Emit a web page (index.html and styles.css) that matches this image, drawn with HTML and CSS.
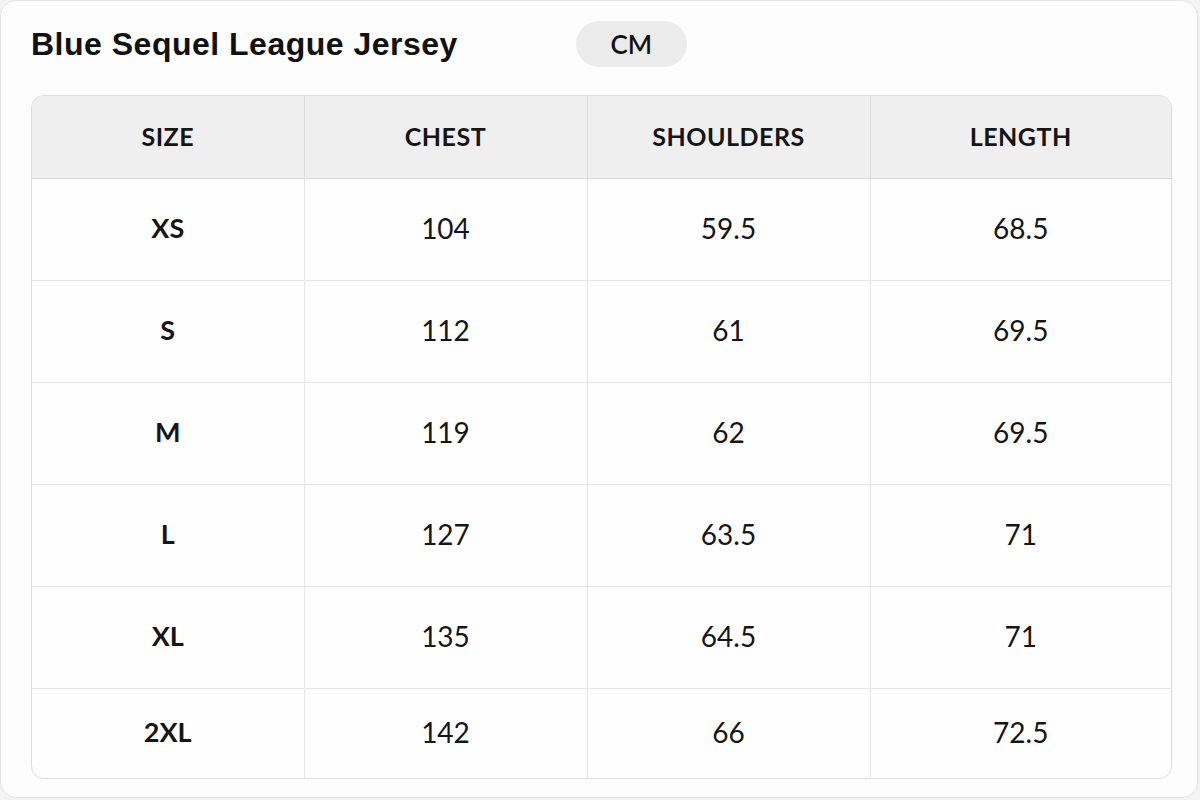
FILE: index.html
```html
<!DOCTYPE html>
<html lang="en">
<head>
<meta charset="utf-8">
<title>Blue Sequel League Jersey – Size Chart</title>
<link rel="stylesheet" href="styles.css">
</head>
<body>
<div class="card">
  <div class="top">
    <h1 class="title">Blue Sequel League Jersey</h1>
    <span class="unit">CM</span>
  </div>
  <div class="table-wrap">
    <table class="chart">
      <colgroup>
        <col class="c1"><col class="c2"><col class="c3"><col class="c4">
      </colgroup>
      <thead>
        <tr><th>SIZE</th><th>CHEST</th><th>SHOULDERS</th><th>LENGTH</th></tr>
      </thead>
      <tbody>
        <tr><td class="size">XS</td><td>104</td><td>59.5</td><td>68.5</td></tr>
        <tr><td class="size">S</td><td>112</td><td>61</td><td>69.5</td></tr>
        <tr><td class="size">M</td><td>119</td><td>62</td><td>69.5</td></tr>
        <tr><td class="size">L</td><td>127</td><td>63.5</td><td>71</td></tr>
        <tr><td class="size">XL</td><td>135</td><td>64.5</td><td>71</td></tr>
        <tr class="last"><td class="size">2XL</td><td>142</td><td>66</td><td>72.5</td></tr>
      </tbody>
    </table>
  </div>
</div>
</body>
</html>
```
FILE: styles.css
```css
* { box-sizing: border-box; }
html, body { margin: 0; padding: 0; }
body {
  background: #f3f3f3;
  width: 1200px;
  height: 800px;
  overflow: hidden;
  font-family: "Lato", "Open Sans", sans-serif;
  color: #111;
}
.card {
  width: 1198px;
  height: 798px;
  background: #fdfdfd;
  border: 1px solid #e4e4e4;
  border-radius: 16px;
  padding: 20px 25px 20px 30px;
}
.top {
  display: flex;
  align-items: center;
  gap: 118px;
  height: 46px;
}
.title {
  margin: 0;
  font-family: "Liberation Sans", Arial, sans-serif;
  font-weight: 700;
  font-size: 32px;
  color: #111;
  letter-spacing: 0.5px;
}
.unit {
  display: inline-flex;
  align-items: center;
  justify-content: center;
  width: 111px;
  height: 46px;
  border-radius: 23px;
  background: #ebebeb;
  font-size: 26px;
  font-weight: 600;
  color: #111;
}
.table-wrap {
  margin-top: 28px;
  width: 1141px;
  border: 1px solid #dddddd;
  border-radius: 13px;
  overflow: hidden;
  background: #fefefe;
}
.chart {
  width: 100%;
  border-collapse: collapse;
  table-layout: fixed;
}
.c1 { width: 272px; }
.c2 { width: 283px; }
.c3 { width: 283px; }
.c4 { width: auto; }
.chart th {
  height: 82px;
  background: #efefef;
  font-size: 25px;
  font-weight: 700;
  letter-spacing: 0.5px;
  color: #151515;
  border-bottom: 1px solid #d9d9d9;
  border-left: 1px solid #dadada;
  text-align: center;
  padding: 0 0 2px;
}
.chart td {
  height: 102px;
  font-size: 28px;
  font-weight: 400;
  color: #151515;
  text-align: center;
  border-top: 1px solid #e6e6e6;
  border-left: 1px solid #e6e6e6;
  padding: 0 0 3px;
}
.chart th:first-child, .chart td:first-child { border-left: none; }
.chart tbody tr:first-child td { border-top: none; }
.chart td.size { font-weight: 700; font-size: 27px; }
.chart tr.last td { height: 90px; }
```
